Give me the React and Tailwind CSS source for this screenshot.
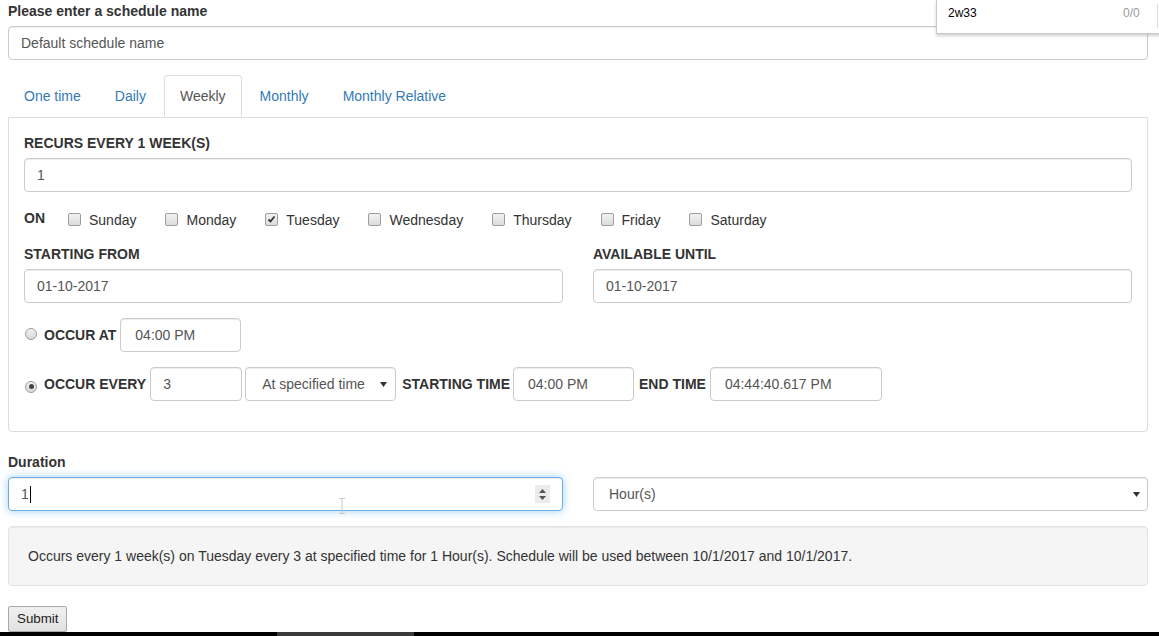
import React from "react";

function Box({ className = "", children }) {
  return (
    <div
      className={
        "h-[34px] flex items-center border border-[#ccc] rounded-[4px] bg-white text-[14px] text-[#555] shadow-[inset_0_1px_1px_rgba(0,0,0,0.075)] " +
        className
      }
    >
      {children}
    </div>
  );
}

function Arrow() {
  return (
    <svg width="7" height="5" viewBox="0 0 7 5" className="shrink-0">
      <polygon points="0,0 7,0 3.5,5" fill="#333" />
    </svg>
  );
}

function Checkbox({ checked }) {
  return (
    <span className="relative inline-block w-[13px] h-[13px] rounded-[2px] border border-[#9d9d9d] bg-gradient-to-b from-[#f2f2f2] to-[#dcdcdc] shrink-0">
      {checked && (
        <svg width="11" height="11" viewBox="0 0 11 11" className="absolute left-[0px] top-[0px]">
          <path d="M2.5 5.5 L4.5 7.5 L8.5 2.5" stroke="#333" strokeWidth="1.8" fill="none" />
        </svg>
      )}
    </span>
  );
}

function Radio({ checked }) {
  return (
    <span className="relative inline-flex items-center justify-center w-[12px] h-[12px] rounded-full border border-[#9d9d9d] bg-gradient-to-b from-[#f2f2f2] to-[#d8d8d8] shrink-0">
      {checked && <span className="block w-[5px] h-[5px] rounded-full bg-[#444]" />}
    </span>
  );
}

const days = [
  ["Sunday", false],
  ["Monday", false],
  ["Tuesday", true],
  ["Wednesday", false],
  ["Thursday", false],
  ["Friday", false],
  ["Saturday", false],
];

const tabs = ["One time", "Daily", "Weekly", "Monthly", "Monthly Relative"];

export default function App() {
  return (
    <div className="relative w-[1159px] h-[636px] overflow-hidden bg-white font-['Liberation_Sans',Arial,sans-serif] text-[14px] leading-[20px] text-[#333]">
      <div className="pl-[8px] w-[1148px] pt-[1px]">
        <div className="font-bold mb-[5px]">Please enter a schedule name</div>
        <Box className="px-[12px]">Default schedule name</Box>

        {/* Tabs */}
        <div className="mt-[15px] flex h-[42px]">
          {tabs.map((t) => (
            <div
              key={t}
              className={
                "mr-[2px] px-[15px] py-[10px] border rounded-t-[4px] " +
                (t === "Weekly"
                  ? "border-[#ddd] border-b-transparent bg-white text-[#555]"
                  : "border-transparent text-[#337ab7]")
              }
            >
              {t}
            </div>
          ))}
        </div>

        {/* Panel */}
        <div className="border border-[#ddd] rounded-b-[4px] px-[15px] pt-[15px] pb-[30px]">
          <div className="font-bold mb-[5px]">RECURS EVERY 1 WEEK(S)</div>
          <Box className="px-[12px] mb-[15px]">1</Box>

          <div className="flex items-center h-[22px] pt-[3px] mb-[15px]">
            <span className="font-bold w-[44px] -mt-[4px]">ON</span>
            <div className="flex items-center">
              {days.map(([d, c], i) => (
                <div key={d} className={"flex items-center " + (i === 0 ? "ml-[0px]" : "ml-[29px]")}>
                  <Checkbox checked={c} />
                  <span className="ml-[8px]">{d}</span>
                </div>
              ))}
            </div>
          </div>

          <div className="grid grid-cols-2 gap-x-[30px] mb-[15px]">
            <div>
              <div className="font-bold mb-[5px]">STARTING FROM</div>
              <Box className="px-[12px]">01-10-2017</Box>
            </div>
            <div>
              <div className="font-bold mb-[5px]">AVAILABLE UNTIL</div>
              <Box className="px-[12px]">01-10-2017</Box>
            </div>
          </div>

          <div className="flex items-center h-[34px] mb-[15px]">
            <span className="ml-[1px]">
              <Radio />
            </span>
            <span className="ml-[7px] font-bold">OCCUR AT</span>
            <Box className="ml-[4px] w-[121px] pl-[14px]">04:00 PM</Box>
          </div>

          <div className="flex items-center h-[34px]">
            <span className="ml-[1px]">
              <Radio checked />
            </span>
            <span className="ml-[7px] font-bold">OCCUR EVERY</span>
            <Box className="ml-[4px] w-[92px] px-[12px]">3</Box>
            <Box className="ml-[3px] w-[151px] pl-[16px] pr-[8px] justify-between">
              <span>At specified time</span>
              <Arrow />
            </Box>
            <span className="ml-[6px] font-bold">STARTING TIME</span>
            <Box className="ml-[3px] w-[121px] pl-[14px]">04:00 PM</Box>
            <span className="ml-[5px] font-bold">END TIME</span>
            <Box className="ml-[4px] w-[172px] pl-[14px]">04:44:40.617 PM</Box>
          </div>
        </div>

        {/* Duration */}
        <div className="mt-[20px] font-bold mb-[5px]">Duration</div>
        <div className="grid grid-cols-2 gap-x-[30px]">
          <div className="h-[34px] flex items-center border border-[#66afe9] rounded-[4px] bg-white text-[#555] pl-[12px] pr-[12px] shadow-[inset_0_1px_1px_rgba(0,0,0,0.075),0_0_8px_rgba(102,175,233,0.6)]">
            <span>1</span>
            <span className="ml-[1px] block w-[1px] h-[17px] bg-black" />
            <span className="flex-1" />
            <span className="flex flex-col items-center justify-center gap-[3px] w-[15px] h-[18px] bg-[#ebebeb]">
              <svg width="7" height="4" viewBox="0 0 7 4">
                <polygon points="0,4 7,4 3.5,0" fill="#555" />
              </svg>
              <svg width="7" height="4" viewBox="0 0 7 4">
                <polygon points="0,0 7,0 3.5,4" fill="#555" />
              </svg>
            </span>
          </div>
          <Box className="pl-[15px] pr-[7px] justify-between">
            <span>Hour(s)</span>
            <Arrow />
          </Box>
        </div>

        {/* Well */}
        <div className="mt-[15px] h-[60px] flex items-center px-[19px] bg-[#f5f5f5] border border-[#e3e3e3] rounded-[4px] shadow-[inset_0_1px_1px_rgba(0,0,0,0.05)]">
          Occurs every 1 week(s) on Tuesday every 3 at specified time for 1 Hour(s). Schedule will be used between 10/1/2017 and 10/1/2017.
        </div>

        <div className="mt-[20px] flex">
          <button className="h-[26px] px-[8px] border border-[#a9a9a9] rounded-[2px] bg-gradient-to-b from-[#f0f0f0] to-[#e1e1e1] text-[13.33px] leading-[16px] text-[#222] font-['Liberation_Sans',Arial,sans-serif]">
            Submit
          </button>
        </div>
      </div>

      {/* mouse I-beam */}
      <svg className="absolute left-[338px] top-[498px]" width="8" height="16" viewBox="0 0 8 16">
        <path d="M1 0.5 H7 M4 0.5 V15.5 M1 15.5 H7" stroke="#c8c8c8" strokeWidth="1" fill="none" />
      </svg>

      {/* find bar */}
      <div className="absolute top-0 left-[936px] w-[230px] h-[34px] bg-white border-l border-b border-[#c8c8c8] shadow-[0_2px_3px_rgba(0,0,0,0.18)] flex items-center text-[12px] font-['Liberation_Sans',Arial,sans-serif]">
        <span className="ml-[11px] -mt-[8px] text-black">2w33</span>
        <span className="ml-auto mr-[10px] -mt-[8px] text-[#9a9a9a] w-[24px]">0/0</span>
        <span className="mr-[8px] mt-[-2px] block w-[1px] h-[24px] bg-[#ddd]" />
      </div>

      {/* bottom bar */}
      <div className="absolute left-0 bottom-0 w-full h-[4px] bg-black">
        <div className="absolute left-[277px] top-0 w-[137px] h-[4px] bg-[#3a3a3a]" />
      </div>
    </div>
  );
}
